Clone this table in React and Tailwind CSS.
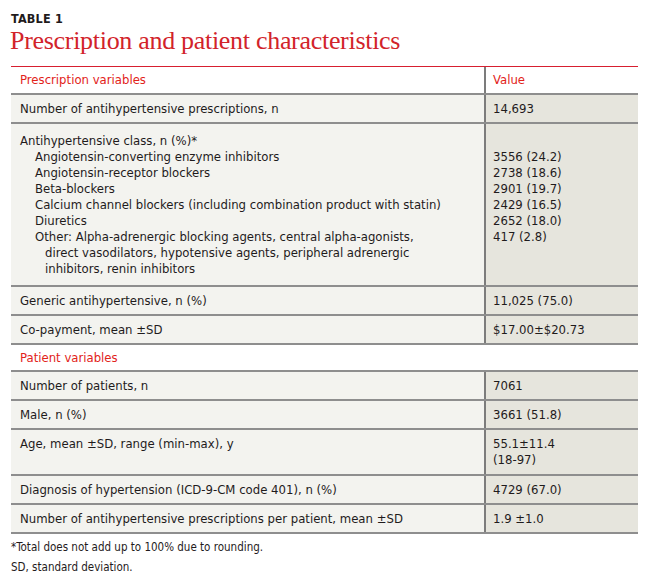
import React from "react";

const sans = { fontFamily: '"DejaVu Sans Condensed", "Liberation Sans", sans-serif' };

function Row({ label, value, tall }) {
  return (
    <div className="flex border-b-2 border-[#8e8e8e]">
      <div className={`w-[473px] bg-[#f3f3ef] pl-[9px] ${tall ? "pt-[6px] pb-[6px]" : "h-[27px] flex items-center"}`}>
        {label}
      </div>
      <div className={`flex-1 bg-[#e6e5dd] border-l-2 border-[#7c7c7c] pl-[7px] ${tall ? "pt-[6px] pb-[6px]" : "h-[27px] flex items-center"}`}>
        {value}
      </div>
    </div>
  );
}

const classes = [
  ["Angiotensin-converting enzyme inhibitors", "3556 (24.2)"],
  ["Angiotensin-receptor blockers", "2738 (18.6)"],
  ["Beta-blockers", "2901 (19.7)"],
  ["Calcium channel blockers (including combination product with statin)", "2429 (16.5)"],
  ["Diuretics", "2652 (18.0)"],
];

export default function App() {
  return (
    <div className="w-[650px] h-[579px] bg-white pl-[11px] pr-[12px] pt-[11px] text-[#1f1b1c]" style={sans}>
      <div className="text-[12.5px] font-bold leading-[15px] tracking-[0.2px]">TABLE 1</div>
      <h1
        className="text-[26px] leading-[30px] text-[#d2232a] tracking-[-0.3px] -ml-[1px]"
        style={{ fontFamily: '"Liberation Serif", "DejaVu Serif", serif' }}
      >
        Prescription and patient characteristics
      </h1>

      <div className="mt-[10px] border-t-[1.5px] border-[#d71f30] text-[13px] leading-[16px]">
        <div className="flex border-b-2 border-[#8e8e8e] text-[#e2231a]">
          <div className="w-[473px] h-[26px] flex items-center pl-[9px]">Prescription variables</div>
          <div className="flex-1 h-[26px] flex items-center border-l-2 border-[#7c7c7c] pl-[7px]">Value</div>
        </div>

        <Row label="Number of antihypertensive prescriptions, n" value="14,693" />

        <div className="flex border-b-2 border-[#8e8e8e]">
          <div className="w-[473px] bg-[#f3f3ef] pl-[9px] pt-[9px] pb-[8px]">
            <div>Antihypertensive class, n (%)*</div>
            {classes.map(([l]) => (
              <div key={l} className="pl-[15px]">{l}</div>
            ))}
            <div className="pl-[15px]">Other: Alpha-adrenergic blocking agents, central alpha-agonists,</div>
            <div className="pl-[25px]">direct vasodilators, hypotensive agents, peripheral adrenergic</div>
            <div className="pl-[25px]">inhibitors, renin inhibitors</div>
          </div>
          <div className="flex-1 bg-[#e6e5dd] border-l-2 border-[#7c7c7c] pl-[7px] pt-[9px] pb-[8px]">
            <div>&nbsp;</div>
            {classes.map(([l, v]) => (
              <div key={l}>{v}</div>
            ))}
            <div>417 (2.8)</div>
          </div>
        </div>

        <Row label="Generic antihypertensive, n (%)" value="11,025 (75.0)" />
        <Row label="Co-payment, mean ±SD" value="$17.00±$20.73" />

        <div className="h-[27px] flex items-center pl-[9px] border-b-2 border-[#8e8e8e] text-[#e2231a]">
          Patient variables
        </div>

        <Row label="Number of patients, n" value="7061" />
        <Row label="Male, n (%)" value="3661 (51.8)" />
        <Row
          tall
          label={<div className="h-[32px]">Age, mean ±SD, range (min-max), y</div>}
          value={
            <div>
              <div>55.1±11.4</div>
              <div>(18-97)</div>
            </div>
          }
        />
        <Row label="Diagnosis of hypertension (ICD-9-CM code 401), n (%)" value="4729 (67.0)" />
        <Row label="Number of antihypertensive prescriptions per patient, mean ±SD" value="1.9 ±1.0" />
      </div>

      <div className="text-[11.5px] leading-[20px] mt-[3px]">
        <div>*Total does not add up to 100% due to rounding.</div>
        <div>SD, standard deviation.</div>
      </div>
    </div>
  );
}
